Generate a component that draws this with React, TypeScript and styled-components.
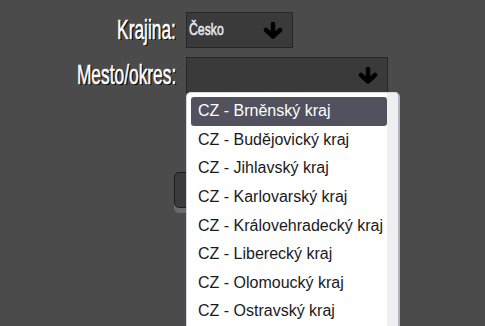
import React from "react";
import styled, { createGlobalStyle } from "styled-components";

const Global = createGlobalStyle`
  html, body { margin: 0; padding: 0; background: #4b4b4b; }
  body { width: 485px; height: 326px; overflow: hidden; }
`;

const Page = styled.div`
  position: relative;
  width: 485px;
  height: 326px;
  padding-top: 12px;
  box-sizing: border-box;
  overflow: hidden;
`;

const Form = styled.div`
  display: grid;
  grid-template-columns: 176px auto;
  column-gap: 10px;
  row-gap: 9px;
  align-items: center;
  justify-items: start;
`;

const Label = styled.label`
  justify-self: end;
  display: inline-block;
  transform: scaleX(0.62);
  transform-origin: right center;
  font-family: "Liberation Sans", Arial, sans-serif;
  font-size: 28px;
  color: #fff;
  -webkit-text-stroke: 0.6px #fff;
  text-shadow: 1px 1px 0 #000, 2px 1px 0 #000;
  line-height: 36px;
  white-space: nowrap;
`;

const SelectBox = styled.div<{ $w: number }>`
  position: relative;
  box-sizing: border-box;
  width: ${(p) => p.$w}px;
  height: 36px;
  background: #3a3a3a;
  border: 1px solid #262626;
  display: flex;
  align-items: center;
  justify-content: space-between;
  padding: 0 9px 0 2px;
`;

const Value = styled.span`
  display: inline-block;
  transform: scaleX(0.72);
  transform-origin: left center;
  font-family: "Liberation Sans", Arial, sans-serif;
  font-size: 17px;
  color: #e8ecf4;
  -webkit-text-stroke: 0.5px #e8ecf4;
`;

const Arrow = () => (
  <svg width="20" height="17" viewBox="0 0 20 17">
    <path d="M10 2 V14 M3 8 L10 14.5 L17 8" stroke="#000" strokeWidth="4.5" strokeLinecap="round" strokeLinejoin="round" fill="none" />
  </svg>
);

const Holder = styled.div`
  position: relative;
`;

const Dropdown = styled.div`
  position: absolute;
  left: 0;
  top: 35px;
  width: 214px;
  height: 240px;
  box-sizing: border-box;
  background: #fff;
  border: 1px solid #d6d6dc;
  border-right: 2px solid #b4b4bc;
  border-radius: 5px 5px 0 0;
  display: flex;
  z-index: 2;
`;

const List = styled.ul`
  list-style: none;
  margin: 0;
  padding: 4px 0 0 4px;
  flex: 1;
`;

const Track = styled.div`
  width: 11px;
  background: #efeff2;
  border-radius: 0 4px 0 0;
`;

const Item = styled.li<{ $active?: boolean }>`
  height: 28.6px;
  display: flex;
  align-items: center;
  padding-left: 7px;
  border-radius: 3px;
  font-family: "Liberation Sans", Arial, sans-serif;
  font-size: 16px;
  white-space: nowrap;
  color: ${(p) => (p.$active ? "#fff" : "#1a1a1a")};
  background: ${(p) => (p.$active ? "#52525e" : "transparent")};
`;

const ButtonRow = styled.div`
  display: flex;
  justify-content: center;
  margin-top: 79px;
`;

const Button = styled.button`
  width: 137px;
  height: 36px;
  background: #3b3b3b;
  border: 1px solid #1e1e1e;
  border-radius: 5px;
  box-shadow: 0 5px 0 #6a6a6a;
`;

const items = [
  "CZ - Brněnský kraj",
  "CZ - Budějovický kraj",
  "CZ - Jihlavský kraj",
  "CZ - Karlovarský kraj",
  "CZ - Královehradecký kraj",
  "CZ - Liberecký kraj",
  "CZ - Olomoucký kraj",
  "CZ - Ostravský kraj",
];

export default function App() {
  return (
    <>
      <Global />
      <Page>
        <Form>
          <Label>Krajina:</Label>
          <SelectBox $w={107}>
            <Value>Česko</Value>
            <Arrow />
          </SelectBox>
          <Label>Mesto/okres:</Label>
          <Holder>
            <SelectBox $w={202}>
              <span />
              <Arrow />
            </SelectBox>
            <Dropdown>
              <List>
                {items.map((t, i) => (
                  <Item key={t} $active={i === 0}>{t}</Item>
                ))}
              </List>
              <Track />
            </Dropdown>
          </Holder>
        </Form>
        <ButtonRow>
          <Button />
        </ButtonRow>
      </Page>
    </>
  );
}
